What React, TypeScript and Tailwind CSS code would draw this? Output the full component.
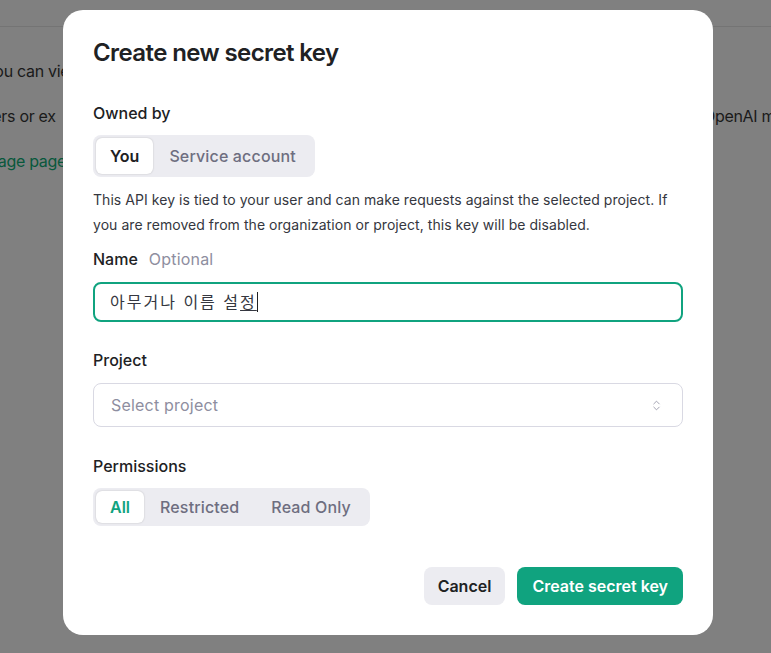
import { ChevronsUpDown } from "lucide-react";

const font = { fontFamily: "Inter, 'Noto Sans CJK KR', sans-serif" };

function Segmented({
  items,
  active,
  activeClass,
  className,
}: {
  items: string[];
  active: number;
  activeClass?: string;
  className?: string;
}) {
  return (
    <div className={`inline-flex rounded-lg bg-[#ececf1] p-[3px] text-[16px] ${className ?? ""}`}>
      {items.map((item, i) => (
        <div
          key={item}
          className={
            i === active
              ? `flex items-center rounded-md bg-white px-[14px] font-semibold shadow-[0_0_2px_rgba(0,0,0,0.2)] ${activeClass ?? ""}`
              : "flex items-center px-[16px] font-medium tracking-[0.15px] text-[#6e6e80]"
          }
        >
          {item}
        </div>
      ))}
    </div>
  );
}

export default function App() {
  return (
    <div className="relative h-[653px] w-[771px] overflow-hidden bg-[#808080] text-[#202123]" style={font}>
      {/* page behind the backdrop */}
      <div className="h-[27px] border-b border-[#747474]" />
      <div className="flex flex-col gap-[21px] pt-[32px] text-[16px] tracking-[-0.3px] text-[#1a1a1a]">
        <div className="-ml-[15px]">You can view and manage</div>
        <div className="flex">
          <span className="-ml-[25px] w-[728px] shrink-0">users or ex</span>
          <span className="shrink-0">OpenAI models</span>
        </div>
        <div className="-ml-[22px] text-[#08583c]">Usage page.</div>
      </div>

      {/* modal */}
      <div className="absolute left-[63px] top-[10px] w-[650px] rounded-[20px] bg-white px-[30px] pb-[30px] pt-[28px]">
        <h2 className="text-[24px] font-semibold leading-[30px] tracking-[-0.6px]">Create new secret key</h2>

        <div className="mt-[35px] text-[16px] font-medium leading-[20px]">Owned by</div>
        <Segmented items={["You", "Service account"]} active={0} className="mt-[12px] h-[42px]" />
        <p className="mt-[10px] text-[14px] leading-[25px] tracking-[0.05px] text-[#353740]">
          This API key is tied to your user and can make requests against the selected project. If you are removed
          from the organization or project, this key will be disabled.
        </p>

        <div className="mt-[12px] flex items-baseline gap-[11px] text-[16px] leading-[20px]">
          <span className="font-medium">Name</span>
          <span className="tracking-[0.2px] text-[#8e8ea0]">Optional</span>
        </div>
        <div className="mt-[13px] flex h-[40px] items-center rounded-lg border-2 border-[#10a37f] px-[15px] text-[16px] tracking-[2px] text-[#353740]">
          <span>
            아무거나 이름 설<span className="underline underline-offset-2">정</span>
          </span>
          <span className="h-[20px] w-px bg-[#202123]" />
        </div>

        <div className="mt-[28px] text-[16px] font-medium leading-[20px]">Project</div>
        <div className="mt-[13px] flex h-[44px] items-center justify-between rounded-lg border border-[#d9d9e3] pl-[17px] pr-[19px] text-[16px] tracking-[0.2px] text-[#8e8ea0]">
          <span>Select project</span>
          <ChevronsUpDown size={13} strokeWidth={1.5} className="text-[#8e8ea0]" />
        </div>

        <div className="mt-[29px] text-[16px] font-medium leading-[20px]">Permissions</div>
        <Segmented
          items={["All", "Restricted", "Read Only"]}
          active={0}
          activeClass="text-[#10a37f]"
          className="mt-[12px] h-[38px]"
        />

        <div className="mt-[41px] flex justify-end gap-[12px] text-[16px] font-semibold">
          <button className="h-[38px] rounded-lg bg-[#ececf1] px-[14px] text-[#202123]">Cancel</button>
          <button className="h-[38px] rounded-lg bg-[#10a37f] px-[15px] text-white">Create secret key</button>
        </div>
      </div>
    </div>
  );
}
